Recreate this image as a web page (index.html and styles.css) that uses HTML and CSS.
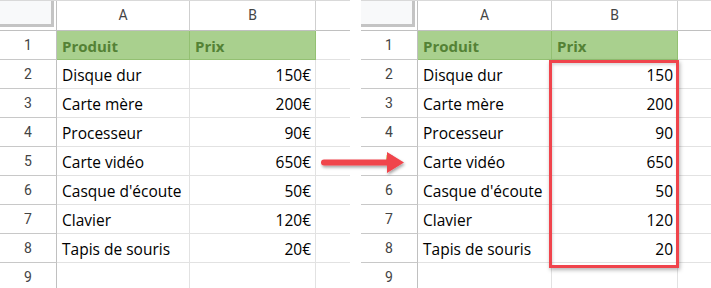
FILE: index.html
```html
<!DOCTYPE html>
<html lang="fr">
<head>
<meta charset="utf-8">
<link rel="stylesheet" href="styles.css">
</head>
<body>
<div class="page">
  <div class="sheet left">
    <div class="corner"><div class="corner-box"></div></div>
    <div class="colhead">A</div><div class="colhead">B</div><div class="colhead last"></div>

    <div class="rowhead">1</div><div class="cell hdr">Produit</div><div class="cell hdr">Prix</div><div class="cell last"></div>
    <div class="rowhead">2</div><div class="cell">Disque dur</div><div class="cell num">150€</div><div class="cell last"></div>
    <div class="rowhead">3</div><div class="cell">Carte mère</div><div class="cell num">200€</div><div class="cell last"></div>
    <div class="rowhead">4</div><div class="cell">Processeur</div><div class="cell num">90€</div><div class="cell last"></div>
    <div class="rowhead">5</div><div class="cell">Carte vidéo</div><div class="cell num">650€</div><div class="cell last"></div>
    <div class="rowhead">6</div><div class="cell">Casque d'écoute</div><div class="cell num">50€</div><div class="cell last"></div>
    <div class="rowhead">7</div><div class="cell">Clavier</div><div class="cell num">120€</div><div class="cell last"></div>
    <div class="rowhead">8</div><div class="cell">Tapis de souris</div><div class="cell num">20€</div><div class="cell last"></div>
    <div class="rowhead">9</div><div class="cell"></div><div class="cell"></div><div class="cell last"></div>
  </div>

  <div class="sheet right">
    <div class="corner"><div class="corner-box"></div></div>
    <div class="colhead">A</div><div class="colhead">B</div><div class="colhead last"></div>

    <div class="rowhead">1</div><div class="cell hdr">Produit</div><div class="cell hdr">Prix</div><div class="cell last"></div>
    <div class="rowhead">2</div><div class="cell">Disque dur</div><div class="cell num">150</div><div class="cell last"></div>
    <div class="rowhead">3</div><div class="cell">Carte mère</div><div class="cell num">200</div><div class="cell last"></div>
    <div class="rowhead">4</div><div class="cell">Processeur</div><div class="cell num">90</div><div class="cell last"></div>
    <div class="rowhead">5</div><div class="cell">Carte vidéo</div><div class="cell num">650</div><div class="cell last"></div>
    <div class="rowhead">6</div><div class="cell">Casque d'écoute</div><div class="cell num">50</div><div class="cell last"></div>
    <div class="rowhead">7</div><div class="cell">Clavier</div><div class="cell num">120</div><div class="cell last"></div>
    <div class="rowhead">8</div><div class="cell">Tapis de souris</div><div class="cell num">20</div><div class="cell last"></div>
    <div class="rowhead">9</div><div class="cell"></div><div class="cell"></div><div class="cell last"></div>
    <div class="highlight"></div>
  </div>

  <svg class="arrow" width="90" height="26" viewBox="0 0 90 26">
    <defs>
      <filter id="sh" x="-20%" y="-40%" width="140%" height="200%">
        <feDropShadow dx="1" dy="2" stdDeviation="1.5" flood-color="#000" flood-opacity="0.35"/>
      </filter>
    </defs>
    <g filter="url(#sh)">
      <path d="M4 9.5 H67 V2 L84 12.5 L67 23 V15.5 H4 A3 3 0 0 1 4 9.5 Z" fill="#f0444c"/>
    </g>
  </svg>
</div>
</body>
</html>
```

FILE: styles.css
```css
* { box-sizing: border-box; }
html, body { margin: 0; padding: 0; background: #fff; }
body { width: 711px; height: 288px; overflow: hidden; }

.page {
  position: relative;
  display: flex;
  gap: 11px;
  width: 711px;
  height: 288px;
  overflow: hidden;
}

.sheet {
  position: relative;
  display: grid;
  grid-template-rows: 30px repeat(9, 29px);
  font-family: "Open Sans", "Noto Sans", sans-serif;
  font-size: 15.5px;
  color: #000;
  border-top: 1px solid #d9d9d9;
}
.sheet.left { width: 350px; grid-template-columns: 57px 133px 126px 34px; }
.sheet.right { width: 350px; grid-template-columns: 57px 134px 126px 33px; }

.corner {
  border-right: 1px solid #c0c0c0;
  border-bottom: 1px solid #c0c0c0;
  background: #fff;
}
.corner-box {
  width: 54px;
  height: 26px;
  background: #f8f9fa;
  border-right: 3px solid #c4c4c4;
  border-bottom: 3px solid #c4c4c4;
}

.colhead {
  display: flex;
  align-items: center;
  justify-content: center;
  font-family: Roboto, "Liberation Sans", sans-serif;
  font-size: 14px;
  color: #444;
  border-right: 1px solid #cfcfcf;
  border-bottom: 1px solid #c0c0c0;
  padding-bottom: 1px;
}
.colhead.last { border-right: none; }

.rowhead {
  display: flex;
  align-items: center;
  justify-content: center;
  font-family: Roboto, "Liberation Sans", sans-serif;
  font-size: 14px;
  color: #444;
  border-right: 1px solid #c0c0c0;
  border-bottom: 1px solid #c8c8c8;
}

.cell {
  display: flex;
  align-items: center;
  padding: 1px 4px 0 5px;
  border-right: 1px solid #e2e2e2;
  border-bottom: 1px solid #e2e2e2;
  white-space: nowrap;
  overflow: visible;
}
.cell.last { border-right: none; }
.cell.num { justify-content: flex-end; }
.cell.hdr {
  background: #a9d08e;
  color: #548235;
  font-weight: 700;
  font-size: 15px;
  border-right-color: #93c072;
  border-bottom-color: #93c072;
}

.highlight {
  position: absolute;
  left: 188px;
  top: 59px;
  width: 130px;
  height: 208px;
  border: 3px solid #f0444c;
  box-shadow: 1px 2px 4px rgba(0,0,0,0.3), inset 1px 2px 3px rgba(0,0,0,0.15);
  pointer-events: none;
}

.arrow {
  position: absolute;
  left: 320px;
  top: 150px;
}
```
